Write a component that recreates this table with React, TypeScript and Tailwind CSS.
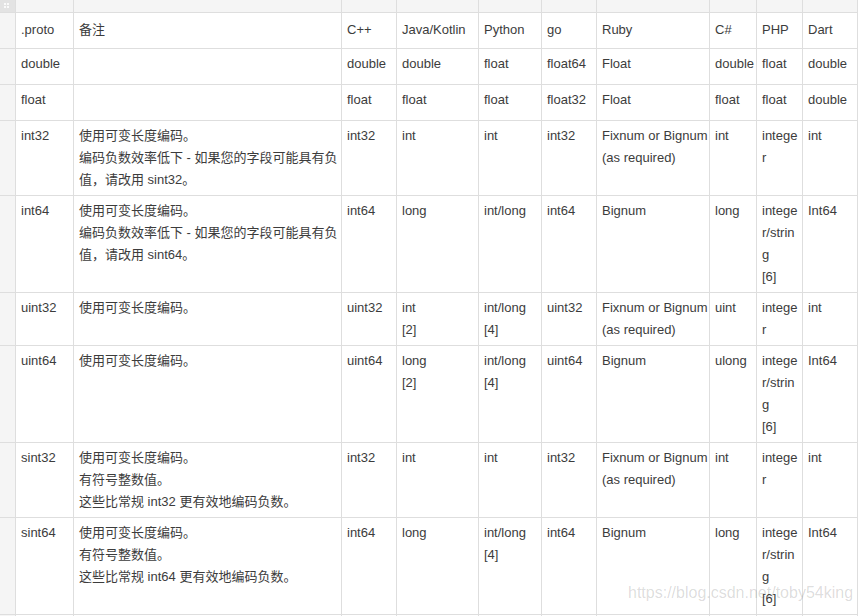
type Cell = string | string[];

const rows: Cell[][] = [
  [".proto", "备注", "C++", "Java/Kotlin", "Python", "go", "Ruby", "C#", "PHP", "Dart"],
  ["double", "", "double", "double", "float", "float64", "Float", "double", "float", "double"],
  ["float", "", "float", "float", "float", "float32", "Float", "float", "float", "double"],
  [
    "int32",
    ["使用可变长度编码。", "编码负数效率低下 - 如果您的字段可能具有负", "值，请改用 sint32。"],
    "int32",
    "int",
    "int",
    "int32",
    ["Fixnum or Bignum", "(as required)"],
    "int",
    ["intege", "r"],
    "int",
  ],
  [
    "int64",
    ["使用可变长度编码。", "编码负数效率低下 - 如果您的字段可能具有负", "值，请改用 sint64。"],
    "int64",
    "long",
    "int/long",
    "int64",
    "Bignum",
    "long",
    ["intege", "r/strin", "g", "[6]"],
    "Int64",
  ],
  [
    "uint32",
    "使用可变长度编码。",
    "uint32",
    ["int", "[2]"],
    ["int/long", "[4]"],
    "uint32",
    ["Fixnum or Bignum", "(as required)"],
    "uint",
    ["intege", "r"],
    "int",
  ],
  [
    "uint64",
    "使用可变长度编码。",
    "uint64",
    ["long", "[2]"],
    ["int/long", "[4]"],
    "uint64",
    "Bignum",
    "ulong",
    ["intege", "r/strin", "g", "[6]"],
    "Int64",
  ],
  [
    "sint32",
    ["使用可变长度编码。", "有符号整数值。", "这些比常规 int32 更有效地编码负数。"],
    "int32",
    "int",
    "int",
    "int32",
    ["Fixnum or Bignum", "(as required)"],
    "int",
    ["intege", "r"],
    "int",
  ],
  [
    "sint64",
    ["使用可变长度编码。", "有符号整数值。", "这些比常规 int64 更有效地编码负数。"],
    "int64",
    "long",
    ["int/long", "[4]"],
    "int64",
    "Bignum",
    "long",
    ["intege", "r/strin", "g", "[6]"],
    "Int64",
  ],
  // next row starts just at the bottom edge, its text is not in view
  ["", "", "", "", "", "", "", "", "", ""],
];

const GripIcon = () => (
  <svg width="5" height="5" viewBox="0 0 5 5" className="mt-[3px] ml-[4px]">
    <rect x="0" y="0" width="2" height="2" fill="#fafafa" />
    <rect x="3" y="0" width="2" height="2" fill="#fafafa" />
    <rect x="0" y="3" width="2" height="2" fill="#fafafa" />
    <rect x="3" y="3" width="2" height="2" fill="#fafafa" />
  </svg>
);

export default function App() {
  return (
    <div className="relative min-h-screen bg-white font-['Liberation_Sans','Noto_Sans_CJK_SC',sans-serif] text-[13px] text-[#3c3c3c]">
      <div className="grid w-[858px] grid-cols-[15px_57px_267px_54px_81px_62px_54px_112px_46px_45px_54px] gap-px border-r border-[#dedede] bg-[#dedede]">
        {/* column handle bar */}
        <div className="h-[12px] bg-[#e3e3e3]">
          <GripIcon />
        </div>
        {Array.from({ length: 10 }).map((_, i) => (
          <div key={i} className="h-[12px] bg-[#f5f5f5]" />
        ))}

        {rows.map((row, r) => (
          <div key={r} className="contents">
            <div className="bg-[#f5f5f5]" />
            {row.map((cell, c) => {
              const lines = Array.isArray(cell) ? cell : [cell];
              return (
                <div
                  key={c}
                  className={`min-h-[35px] bg-white pl-[5px] pr-[2px] pb-[4px] leading-[22px] whitespace-nowrap ${
                    r === 0 ? "pt-[6px]" : "pt-[4px]"
                  }`}
                >
                  {lines.map((l, k) => (
                    <div key={k}>{l}</div>
                  ))}
                </div>
              );
            })}
          </div>
        ))}
      </div>

      <div className="pointer-events-none absolute left-[628px] top-[585px] text-[16px] leading-[16px] text-black/15">
        https://blog.csdn.net/toby54king
      </div>
    </div>
  );
}
